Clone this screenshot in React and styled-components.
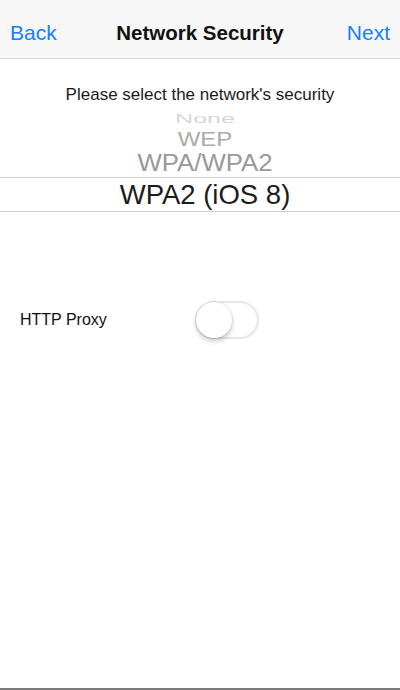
import React from 'react';
import styled, { createGlobalStyle } from 'styled-components';

const GlobalStyle = createGlobalStyle`
  html, body {
    margin: 0;
    padding: 0;
    background: #ffffff;
  }
  body {
    font-family: "Liberation Sans", Arial, sans-serif;
    -webkit-font-smoothing: antialiased;
  }
`;

const Page = styled.div`
  width: 400px;
  height: 690px;
  box-sizing: border-box;
  border-bottom: 2px solid #7a7a7a;
  display: flex;
  flex-direction: column;
  background: #fff;
`;

const NavBar = styled.div`
  height: 50px;
  background: #f7f7f7;
  border-bottom: 1px solid #d9d9d9;
  display: grid;
  grid-template-columns: 1fr auto 1fr;
  align-items: center;
  padding: 8px 10px 0;
`;

const NavButton = styled.span`
  font-size: 21px;
  color: #167efb;
  justify-self: ${(p) => (p.$right ? 'end' : 'start')};
  cursor: pointer;
`;

const NavTitle = styled.span`
  font-size: 20.5px;
  font-weight: bold;
  color: #111;
`;

const Prompt = styled.div`
  margin-top: 26px;
  height: 20px;
  line-height: 20px;
  text-align: center;
  font-size: 17px;
  color: #1a1a1a;
`;

const Picker = styled.div`
  margin-top: 3px;
  display: flex;
  flex-direction: column;
`;

const PickerItem = styled.div`
  height: ${(p) => p.$height}px;
  display: flex;
  align-items: center;
  justify-content: center;
  padding-left: 10px;
  font-size: ${(p) => p.$size}px;
  color: ${(p) => p.$color};
  white-space: nowrap;

  span {
    display: inline-block;
    transform: scaleY(${(p) => p.$scale || 1});
  }
`;

const SelectedItem = styled(PickerItem)`
  border-top: 1px solid #cfcfcf;
  border-bottom: 1px solid #cfcfcf;
`;

const ProxyRow = styled.div`
  margin-top: 88px;
  height: 40px;
  display: grid;
  grid-template-columns: 175px auto;
  align-items: center;
  padding-left: 20px;
`;

const RowLabel = styled.span`
  font-size: 16px;
  color: #111;
`;

const Switch = styled.div`
  width: 64px;
  height: 38px;
  box-sizing: border-box;
  border-radius: 19px;
  border: 2px solid #e6e6e6;
  background: #fff;
  position: relative;
`;

const Knob = styled.div`
  position: absolute;
  left: -1px;
  top: -1px;
  width: 36px;
  height: 36px;
  border-radius: 50%;
  background: #fff;
  box-shadow: 0 3px 5px rgba(0, 0, 0, 0.22), 0 0 0 1px rgba(0, 0, 0, 0.06);
`;

const options = [
  { label: 'None', size: 25, scale: 0.5, color: '#d6d6d6', height: 20 },
  { label: 'WEP', size: 24, scale: 0.82, color: '#ababab', height: 22 },
  { label: 'WPA/WPA2', size: 25.8, scale: 0.93, color: '#999999', height: 27 },
];

export default function App() {
  return (
    <>
      <GlobalStyle />
      <Page>
        <NavBar>
          <NavButton>Back</NavButton>
          <NavTitle>Network Security</NavTitle>
          <NavButton $right>Next</NavButton>
        </NavBar>
        <Prompt>Please select the network's security</Prompt>
        <Picker>
          {options.map((o) => (
            <PickerItem
              key={o.label}
              $size={o.size}
              $scale={o.scale}
              $color={o.color}
              $height={o.height}
            >
              <span>{o.label}</span>
            </PickerItem>
          ))}
          <SelectedItem $size={27.5} $color="#1c1c1c" $height={33}>
            <span>WPA2 (iOS 8)</span>
          </SelectedItem>
        </Picker>
        <ProxyRow>
          <RowLabel>HTTP Proxy</RowLabel>
          <Switch>
            <Knob />
          </Switch>
        </ProxyRow>
      </Page>
    </>
  );
}
